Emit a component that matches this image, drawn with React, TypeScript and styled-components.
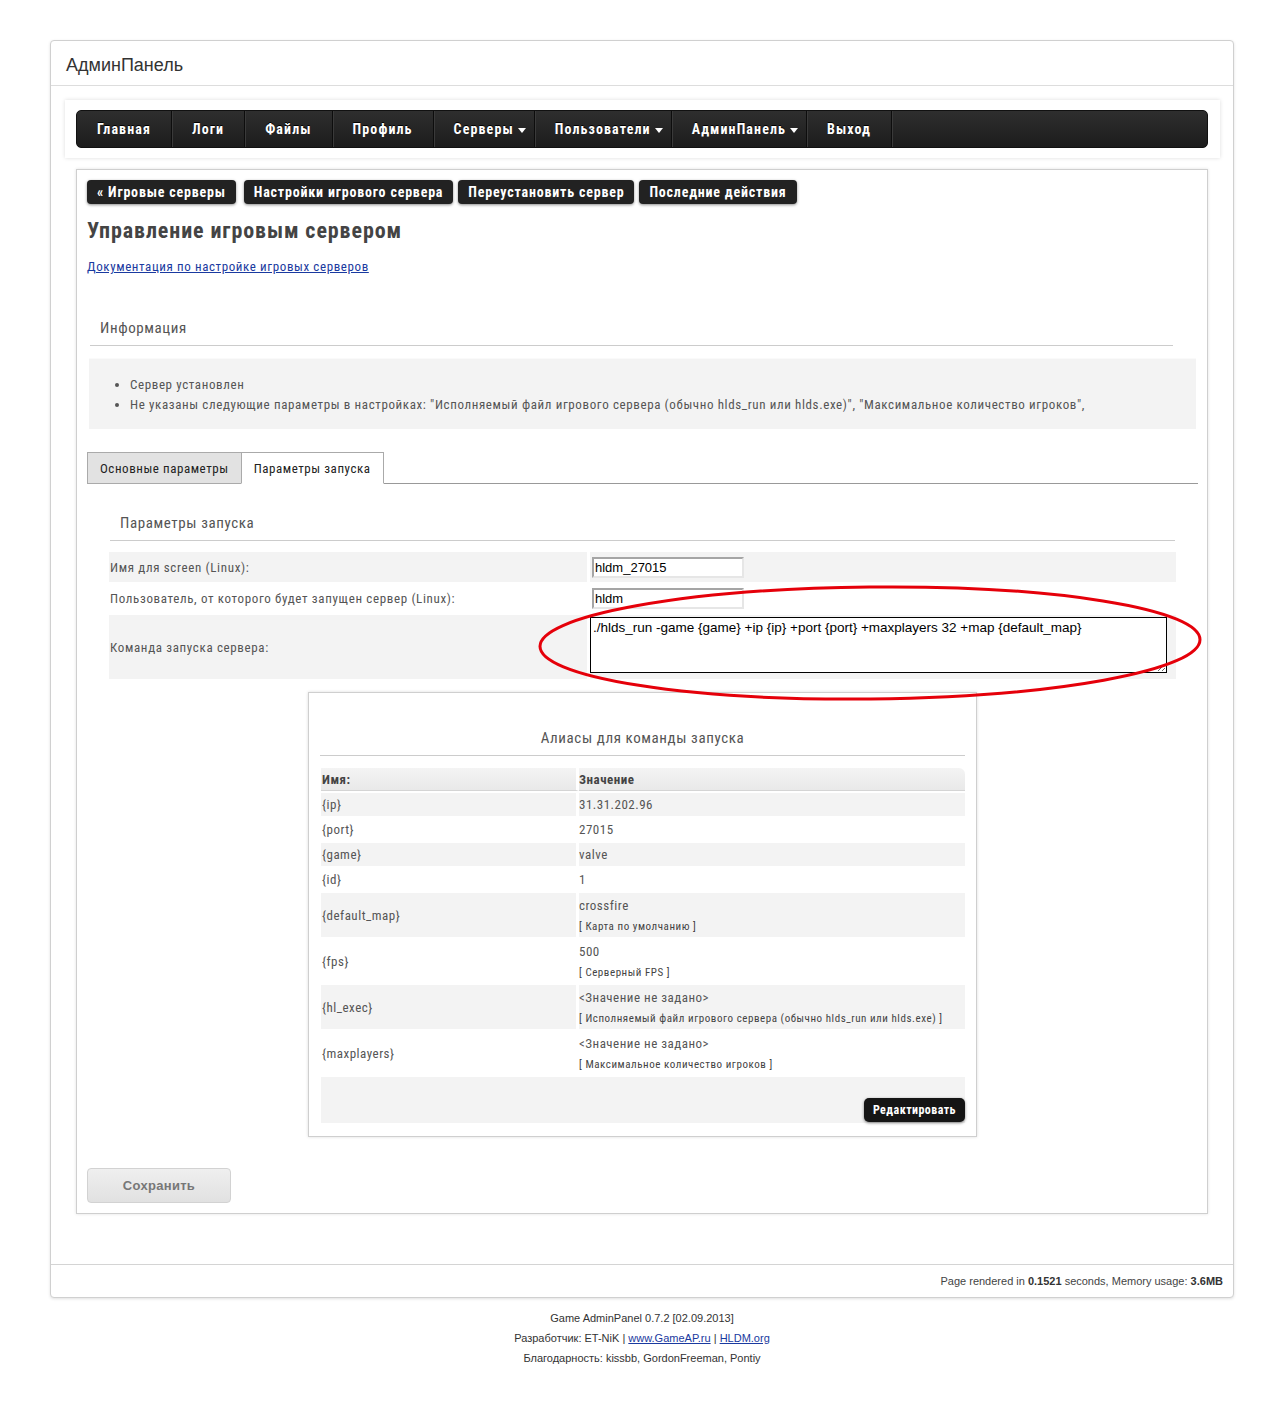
import React from "react";
import styled, { createGlobalStyle, css } from "styled-components";

const SANS = `"Liberation Sans", Arial, sans-serif`;

// Condensed face: Roboto's width axis pulled in to 75%
const narrow = css`
  font-family: Roboto, "Liberation Sans", sans-serif;
  font-stretch: 75%;
`;

const Global = createGlobalStyle`
  * { box-sizing: border-box; }
  body { margin: 0; background: #fff; font-family: ${SANS}; color: #555; }
`;

const Root = styled.div`
  position: relative;
  padding: 40px 50px 30px;
`;

const Card = styled.div`
  border: 1px solid #d0d0d0;
  border-radius: 4px;
  box-shadow: 0 1px 3px rgba(0, 0, 0, 0.12);
  background: #fff;
`;

const Header = styled.div`
  height: 45px;
  padding: 5px 15px 0;
  display: flex;
  align-items: center;
  font-family: ${SANS};
  font-size: 18px;
  color: #333;
  border-bottom: 1px solid #ddd;
`;

const NavWrap = styled.div`
  margin: 14px 13px 0 14px;
  padding: 10px 12px 10px 11px;
  background: #fff;
  box-shadow: 0 0 4px rgba(0, 0, 0, 0.14);
`;

const NavBar = styled.nav`
  height: 38px;
  display: flex;
  background: linear-gradient(#2e2e2e, #1c1c1c);
  border: 1px solid #111;
  border-radius: 5px;
`;

const NavItem = styled.a<{ $menu?: boolean }>`
  display: flex;
  align-items: center;
  gap: 4px;
  padding: 0 ${(p) => (p.$menu ? "8px" : "20px")} 0 20px;
  color: #fff;
  ${narrow};
  font-weight: bold;
  font-size: 14px;
  letter-spacing: 1.1px;
  text-shadow: 0 -1px 0 #000;
  border-right: 1px solid #0d0d0d;
  box-shadow: 1px 0 0 #3a3a3a;
  cursor: pointer;
`;

const Caret = styled.span`
  width: 0;
  height: 0;
  border-left: 4.5px solid transparent;
  border-right: 4.5px solid transparent;
  border-top: 5px solid #fff;
  margin-top: 2px;
`;

const Content = styled.div`
  margin: 11px 25px 0 25px;
  padding: 10px 10px 10px 10px;
  border: 1px solid #cfcfcf;
  box-shadow: 0 0 3px rgba(0, 0, 0, 0.12);
`;

const ButtonRow = styled.div`
  display: flex;
  gap: 5px;
`;

const DarkButton = styled.a`
  height: 24px;
  display: flex;
  align-items: center;
  padding: 0 10px;
  background: #222;
  color: #fff;
  border-radius: 4px;
  ${narrow};
  font-weight: bold;
  font-size: 14px;
  letter-spacing: 0.8px;
  box-shadow: 0 1px 3px rgba(0, 0, 0, 0.45);
  cursor: pointer;
  &:first-child { margin-right: 3px; }
`;

const Title = styled.h2`
  margin: 15px 0 0;
  ${narrow};
  font-size: 22px;
  line-height: 24px;
  font-weight: bold;
  color: #444;
  letter-spacing: 0.9px;
`;

const DocLink = styled.a`
  display: inline-block;
  margin-top: 16px;
  ${narrow};
  font-size: 13px;
  line-height: 16px;
  letter-spacing: 0.6px;
  color: #1a3aa0;
  text-decoration: underline;
`;

const SectionTitle = styled.div<{ $left: number; $right: number; $center?: boolean }>`
  margin: 0 ${(p) => p.$right}px 0 ${(p) => p.$left}px;
  padding: 0 10px 8px;
  ${narrow};
  font-size: 15px;
  letter-spacing: 0.6px;
  color: #555;
  text-align: ${(p) => (p.$center ? "center" : "left")};
  border-bottom: 1px solid #ccc;
`;

const Spacer = styled.div<{ $h: number }>`
  height: ${(p) => p.$h}px;
`;

const InfoBox = styled.div`
  margin: 12px 1px 0 2px;
  padding: 16px 0 14px;
  background: #f3f3f3;
  border-top: 1px solid #fafafa;
`;

const InfoList = styled.ul`
  margin: 0;
  padding-left: 41px;
  ${narrow};
  font-size: 13px;
  line-height: 20px;
  letter-spacing: 0.62px;
  color: #555;
`;

const Tabs = styled.div`
  margin-top: 23px;
  display: flex;
  border-bottom: 1px solid #999;
  margin-right: -1px;
`;

const Tab = styled.div<{ $active?: boolean }>`
  height: 32px;
  padding: 0 12px;
  display: flex;
  align-items: center;
  ${narrow};
  font-size: 13px;
  letter-spacing: 0.55px;
  color: #222;
  background: ${(p) => (p.$active ? "#fff" : "#e2e2e2")};
  border: 1px solid #aaa;
  border-bottom: ${(p) => (p.$active ? "1px solid #fff" : "1px solid #aaa")};
  margin-bottom: -1px;
  margin-left: ${(p) => (p.$active ? "-1px" : "0")};
`;

const TabPanel = styled.div`
  padding: 30px 21px 0 22px;
`;

const FormTable = styled.div`
  margin-top: 11px;
  display: grid;
  grid-template-columns: 478px 1fr;
  column-gap: 3px;
  row-gap: 3px;
`;

const FormLabel = styled.div<{ $shade?: boolean; $h: number }>`
  height: ${(p) => p.$h}px;
  display: flex;
  align-items: center;
  padding-left: 1px;
  ${narrow};
  font-size: 13px;
  letter-spacing: 0.65px;
  color: #555;
  background: ${(p) => (p.$shade ? "#f3f3f3" : "#fff")};
`;

const FormValue = styled.div<{ $shade?: boolean; $h: number }>`
  height: ${(p) => p.$h}px;
  display: flex;
  align-items: center;
  padding-left: 2px;
  background: ${(p) => (p.$shade ? "#f3f3f3" : "#fff")};
`;

const TextInput = styled.input`
  width: 152px;
  height: 21px;
  padding: 0 1px;
  font-family: ${SANS};
  font-size: 13px;
  color: #000;
  border-top: 2px solid #a5a5a5;
  border-left: 2px solid #a5a5a5;
  border-right: 2px solid #e6e6e6;
  border-bottom: 2px solid #e6e6e6;
  outline: none;
  background: #fff;
`;

const CommandArea = styled.textarea`
  align-self: flex-start;
  width: 577px;
  height: 56px;
  margin: 2px 0 0 -2px;
  padding: 2px 2px;
  font-family: ${SANS};
  font-size: 13.5px;
  color: #000;
  border: 1px solid #000;
  outline: none;
`;

const AliasBox = styled.div`
  width: 669px;
  margin: 13px auto 0;
  padding: 36px 11px 13px;
  border: 1px solid #cfcfcf;
  box-shadow: 0 0 3px rgba(0, 0, 0, 0.14);
`;

const AliasTable = styled.table`
  width: 644px;
  margin: 12px 0 0 1px;
  border-collapse: separate;
  border-spacing: 0;
  ${narrow};
  font-size: 13px;
  color: #555;
  letter-spacing: 0.5px;
`;

const HeadCell = styled.th<{ $first?: boolean }>`
  height: 23px;
  padding: 0 ${(p) => (p.$first ? "1px" : "0")};
  text-align: left;
  font-weight: bold;
  color: #444;
  background: linear-gradient(#f4f4f4, #e9e9e9);
  border-bottom: 1px solid #d4d4d4;
  border-right: ${(p) => (p.$first ? "3px solid #fff" : "0")};
  border-top-right-radius: ${(p) => (p.$first ? "0" : "6px")};
`;

const Cell = styled.td<{ $shade?: boolean; $first?: boolean }>`
  padding: 0 ${(p) => (p.$first ? "1px" : "0")};
  vertical-align: middle;
  background: ${(p) => (p.$shade ? "#f3f3f3" : "#fff")};
  border-top: 2px solid #fff;
  border-right: ${(p) => (p.$first ? "3px solid #fff" : "0")};
`;

const ValueMain = styled.div<{ $h: number }>`
  height: ${(p) => p.$h}px;
  display: flex;
  align-items: center;
`;

const Hint = styled.div`
  height: 20px;
  font-size: 11px;
  letter-spacing: 0.55px;
  color: #444;
  line-height: 20px;
`;

const FootCell = styled.td`
  height: 48px;
  padding: 0 0 1px;
  background: #f3f3f3;
  border-top: 2px solid #fff;
  vertical-align: bottom;
  text-align: right;
`;

const EditButton = styled.a`
  display: inline-flex;
  align-items: center;
  height: 24px;
  padding: 0 9px;
  background: #151515;
  color: #fff;
  border-radius: 5px;
  ${narrow};
  font-weight: bold;
  font-size: 12px;
  letter-spacing: 0.45px;
  box-shadow: 0 1px 3px rgba(0, 0, 0, 0.5);
  cursor: pointer;
`;

const SaveButton = styled.button`
  display: block;
  margin-top: 31px;
  width: 144px;
  height: 35px;
  border: 1px solid #d2d2d2;
  border-radius: 4px;
  background: linear-gradient(#efefef, #e1e1e1);
  color: #777;
  font-family: ${SANS};
  font-weight: bold;
  font-size: 13px;
  letter-spacing: 0.3px;
  cursor: pointer;
`;

const CardFooter = styled.div`
  margin-top: 50px;
  height: 33px;
  padding: 0 10px;
  display: flex;
  align-items: center;
  justify-content: flex-end;
  border-top: 1px solid #d4d4d4;
  font-family: ${SANS};
  font-size: 11px;
  color: #444;
  b { color: #333; }
`;

const Credits = styled.div`
  margin-top: 10px;
  text-align: center;
  font-family: ${SANS};
  font-size: 11px;
  line-height: 20px;
  color: #333;
  a { color: #1a3aa0; text-decoration: underline; }
`;

const Annotation = styled.svg`
  position: absolute;
  left: 0;
  top: 0;
  pointer-events: none;
`;

type Alias = { name: string; value: string; hint?: string; shade: boolean };

const aliases: Alias[] = [
  { name: "{ip}", value: "31.31.202.96", shade: true },
  { name: "{port}", value: "27015", shade: false },
  { name: "{game}", value: "valve", shade: true },
  { name: "{id}", value: "1", shade: false },
  { name: "{default_map}", value: "crossfire", hint: "[ Карта по умолчанию ]", shade: true },
  { name: "{fps}", value: "500", hint: "[ Серверный FPS ]", shade: false },
  {
    name: "{hl_exec}",
    value: "<Значение не задано>",
    hint: "[ Исполняемый файл игрового сервера (обычно hlds_run или hlds.exe) ]",
    shade: true,
  },
  {
    name: "{maxplayers}",
    value: "<Значение не задано>",
    hint: "[ Максимальное количество игроков ]",
    shade: false,
  },
];

const navItems: { label: string; menu?: boolean }[] = [
  { label: "Главная" },
  { label: "Логи" },
  { label: "Файлы" },
  { label: "Профиль" },
  { label: "Серверы", menu: true },
  { label: "Пользователи", menu: true },
  { label: "АдминПанель", menu: true },
  { label: "Выход" },
];

export default function App() {
  return (
    <Root>
      <Global />
      <Card>
        <Header>АдминПанель</Header>
        <NavWrap>
          <NavBar>
            {navItems.map((n) => (
              <NavItem key={n.label} $menu={n.menu}>
                {n.label}
                {n.menu && <Caret />}
              </NavItem>
            ))}
          </NavBar>
        </NavWrap>

        <Content>
          <ButtonRow>
            <DarkButton>« Игровые серверы</DarkButton>
            <DarkButton>Настройки игрового сервера</DarkButton>
            <DarkButton>Переустановить сервер</DarkButton>
            <DarkButton>Последние действия</DarkButton>
          </ButtonRow>
          <Title>Управление игровым сервером</Title>
          <DocLink>Документация по настройке игровых серверов</DocLink>

          <Spacer $h={44} />
          <SectionTitle $left={3} $right={24}>Информация</SectionTitle>
          <InfoBox>
            <InfoList>
              <li>Сервер установлен</li>
              <li>
                Не указаны следующие параметры в настройках: "Исполняемый файл игрового сервера (обычно
                hlds_run или hlds.exe)", "Максимальное количество игроков",
              </li>
            </InfoList>
          </InfoBox>

          <Tabs>
            <Tab>Основные параметры</Tab>
            <Tab $active>Параметры запуска</Tab>
          </Tabs>

          <TabPanel>
            <SectionTitle $left={1} $right={1}>Параметры запуска</SectionTitle>
            <FormTable>
              <FormLabel $shade $h={30}>Имя для screen (Linux):</FormLabel>
              <FormValue $shade $h={30}>
                <TextInput defaultValue="hldm_27015" />
              </FormValue>
              <FormLabel $h={27}>Пользователь, от которого будет запущен сервер (Linux):</FormLabel>
              <FormValue $h={27}>
                <TextInput defaultValue="hldm" />
              </FormValue>
              <FormLabel $shade $h={64}>Команда запуска сервера:</FormLabel>
              <FormValue $shade $h={64}>
                <CommandArea
                  defaultValue="./hlds_run -game {game} +ip {ip} +port {port} +maxplayers 32 +map {default_map}"
                />
              </FormValue>
            </FormTable>

            <AliasBox>
              <SectionTitle $left={0} $right={0} $center>
                Алиасы для команды запуска
              </SectionTitle>
              <AliasTable>
                <thead>
                  <tr>
                    <HeadCell $first style={{ width: 258 }}>Имя:</HeadCell>
                    <HeadCell>Значение</HeadCell>
                  </tr>
                </thead>
                <tbody>
                  {aliases.map((a) => (
                    <tr key={a.name}>
                      <Cell $first $shade={a.shade}>{a.name}</Cell>
                      <Cell $shade={a.shade}>
                        <ValueMain $h={a.hint ? 24 : 23}>{a.value}</ValueMain>
                        {a.hint && <Hint>{a.hint}</Hint>}
                      </Cell>
                    </tr>
                  ))}
                  <tr>
                    <FootCell colSpan={2}>
                      <EditButton>Редактировать</EditButton>
                    </FootCell>
                  </tr>
                </tbody>
              </AliasTable>
            </AliasBox>
          </TabPanel>

          <SaveButton>Сохранить</SaveButton>
        </Content>

        <CardFooter>
          <span>
            Page rendered in <b>0.1521</b> seconds, Memory usage: <b>3.6MB</b>
          </span>
        </CardFooter>
      </Card>

      <Credits>
        <div>Game AdminPanel 0.7.2 [02.09.2013]</div>
        <div>
          Разработчик: ET-NiK | <a>www.GameAP.ru</a> | <a>HLDM.org</a>
        </div>
        <div>Благодарность: kissbb, GordonFreeman, Pontiy</div>
      </Credits>

      <Annotation width="1284" height="1408" viewBox="0 0 1284 1408">
        <ellipse
          cx="870"
          cy="643"
          rx="330"
          ry="56"
          fill="none"
          stroke="#e5000a"
          strokeWidth="3"
          transform="rotate(-0.6 870 643)"
        />
      </Annotation>
    </Root>
  );
}
